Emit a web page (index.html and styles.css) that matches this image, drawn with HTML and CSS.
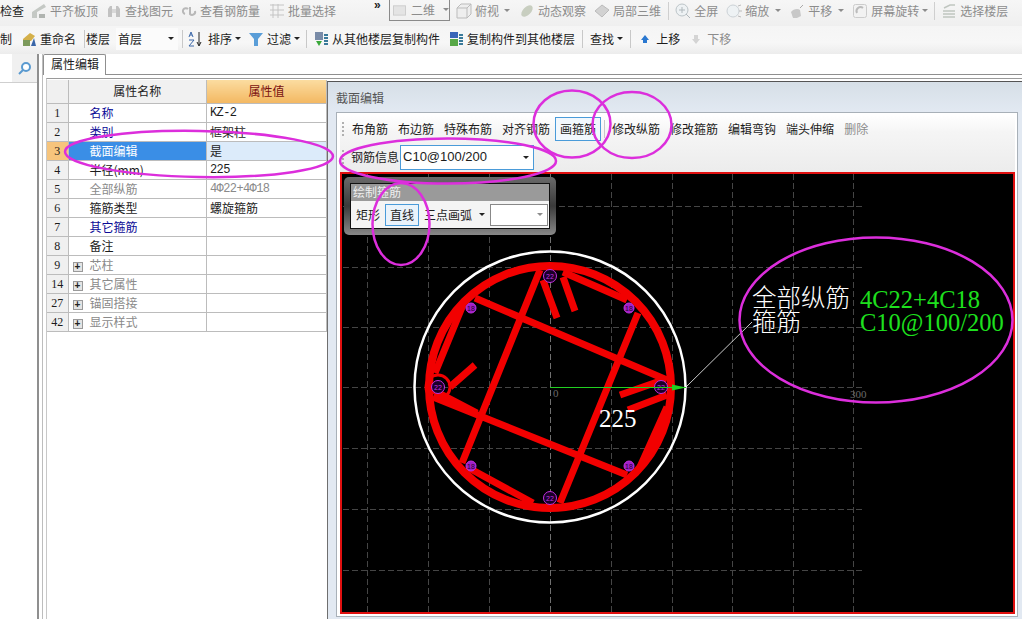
FILE: index.html
```html
<!DOCTYPE html>
<html lang="zh">
<head>
<meta charset="utf-8">
<title>属性编辑</title>
<link rel="stylesheet" href="styles.css">
</head>
<body>
<div class="app">
  <div class="bar bar1 muted">
    <span class="dark">检查</span>
    <svg class="ic ml7" viewBox="0 0 16 16"><path d="M1 15V9l12-8 2 3-9 5v6z" fill="#c4c8c4"/><path d="M8 11h6v4H8z" fill="#b0b4b0"/></svg><span>平齐板顶</span>
    <svg class="ic ml8" viewBox="0 0 16 16"><path d="M2 14V6l2-3h2v11zM10 14V3h2l2 3v8z" fill="#c2c2c2"/><path d="M6 6h4v4H6z" fill="#d8d8d8"/></svg><span>查找图元</span>
    <svg class="ic ml8" viewBox="0 0 16 16"><path d="M7 6a3 3 0 1 0-3 5M9 4v7a3 3 0 0 0 5-3" fill="none" stroke="#b8b8b8" stroke-width="2"/></svg><span>查看钢筋量</span>
    <svg class="ic ml9" viewBox="0 0 16 16"><path d="M1 2h14M1 7h14M1 12h14M4 1v14M9 1v14" stroke="#c4c4c4" fill="none"/></svg><span>批量选择</span>
    <span class="more">»</span>
    <span class="btn2d"><svg class="ic2" viewBox="0 0 14 12"><rect x="0.5" y="1.5" width="13" height="10" fill="#e4e4e4" stroke="#ccc"/></svg><span>二维</span><i class="arrow gray ml8"></i></span>
    <svg class="ic ml6" viewBox="0 0 16 16"><path d="M1 5l4-4h10v10l-4 4H1zM1 5h10v10M11 5l4-4" fill="#eee" stroke="#bbb"/></svg><span>俯视</span><i class="arrow gray ml5"></i>
    <svg class="ic ml9" viewBox="0 0 16 16"><ellipse cx="8" cy="8" rx="7" ry="4" transform="rotate(-45 8 8)" fill="#c8cec0"/></svg><span>动态观察</span>
    <svg class="ic ml8" viewBox="0 0 16 16"><path d="M8 2l7 5-7 7-7-6z" fill="#d2d2d2" stroke="#bbb"/></svg><span>局部三维</span>
    <i class="sep ml7"></i>
    <svg class="ic ml6" viewBox="0 0 16 16"><circle cx="7" cy="7" r="6" fill="#eef2f4" stroke="#bcc4c8"/><path d="M7 4v6M4 7h6M11 11l4 4" stroke="#b0b8bc" fill="none"/></svg><span>全屏</span>
    <svg class="ic ml8" viewBox="0 0 16 16"><circle cx="7" cy="8" r="6" fill="#eef2f4" stroke="#ccd2d6"/><path d="M12 3l3-1M13 8h3M12 13l3 1" stroke="#bbb"/></svg><span>缩放</span><i class="arrow gray ml6"></i>
    <svg class="ic ml8" viewBox="0 0 16 16"><path d="M2 9c2-3 7-4 9-2l1 6-4 2H4z" fill="#c8c8c8"/><path d="M11 5l3-3" stroke="#aaa"/></svg><span>平移</span><i class="arrow gray ml6"></i>
    <svg class="ic ml8" viewBox="0 0 16 16"><rect x="1.5" y="1.5" width="13" height="13" rx="2" fill="#f2f2f2" stroke="#ccc"/><path d="M5 10a4 4 0 0 1 6-5" fill="none" stroke="#bbb" stroke-width="2"/></svg><span>屏幕旋转</span><i class="arrow gray ml3"></i>
    <i class="sep ml6"></i>
    <svg class="ic ml6" viewBox="0 0 16 16"><path d="M3 5l6-3h5M2 8h12M2 11h12M2 14h12" stroke="#c0c6c0" fill="none" stroke-width="1.5"/></svg><span>选择楼层</span>
  </div>
  <div class="bar bar2">
    <span>制</span>
    <svg class="ic ml9" viewBox="0 0 16 16"><path d="M2 8l7-6 5 3-4 5H2z" fill="#d4b04a"/><path d="M2 9h7v6H2z" fill="#7c9a5c"/><path d="M10 15l3-8 2 8z" fill="#3a66a8"/></svg><span>重命名</span>
    <i class="sep sep2 ml8"></i>
    <span class="ml1">楼层</span>
    <span class="floor ml6"><span>首层</span><i class="arrow"></i></span>
    <i class="sep sep2 ml4"></i>
    <svg class="ic ml4 gap5" viewBox="0 0 16 16"><path d="M2 6l2-5 2 5M3 4h2M2 9h5l-5 6h5" fill="none" stroke="#3a66a8"/><path d="M12 1v13M10 11l2 4 2-4" fill="none" stroke="#222"/></svg><span>排序</span><i class="arrow ml3"></i>
    <svg class="ic ml7" viewBox="0 0 16 16"><path d="M1 2h14l-5 6v7H6V8z" fill="#5a9ed8"/></svg><span>过滤</span><i class="arrow ml3"></i>
    <i class="sep sep2 ml6"></i>
    <svg class="ic ml6" viewBox="0 0 16 16"><path d="M2 1h8v8H2z" fill="#7a8ca8"/><path d="M3 10l3 5 3-5z" fill="#3aa83a"/><path d="M11 4h4M11 7h4M11 10h4M11 13h4" stroke="#3a7a9a" stroke-width="2"/></svg><span>从其他楼层复制构件</span>
    <svg class="ic ml8" viewBox="0 0 16 16"><path d="M2 1h8v6H2z" fill="#3a66b8"/><path d="M2 8h8v7H2z" fill="#58a848"/><path d="M11 4h4M11 7h4M11 10h4M11 13h4" stroke="#3a7a9a" stroke-width="2"/></svg><span>复制构件到其他楼层</span>
    <i class="sep sep2 ml7"></i>
    <span class="ml7">查找</span><i class="arrow ml3"></i>
    <i class="sep sep2 ml7"></i>
    <svg class="ic ml6" viewBox="0 0 16 16"><path d="M8 4l4 5h-2v3H6V9H4z" fill="#2a78d0"/></svg><span>上移</span>
    <svg class="ic ml8" viewBox="0 0 16 16"><path d="M8 13l4-5H10V4H6v4H4z" fill="#d4d4d4"/></svg><span class="muted">下移</span>
  </div>
  <div class="main">
    <aside class="side">
      <div class="search"><span class="search-input"></span>
        <svg class="lens" viewBox="0 0 14 14"><circle cx="8" cy="6" r="4" fill="#fff" stroke="#5a9ad0" stroke-width="2"/><path d="M5 9l-4 4" stroke="#5a9ad0" stroke-width="2"/></svg>
      </div>
    </aside>
    <section class="content">
      <div class="tabs"><span class="tab">属性编辑</span></div>
      <div class="work">
        <div class="grid-wrap">
          <table class="props">
            <thead><tr><th class="n"></th><th>属性名称</th><th class="hv">属性值</th></tr></thead>
            <tbody>
              <tr><td class="n">1</td><td class="k blue">名称</td><td class="v mono">KZ-2</td></tr>
              <tr><td class="n">2</td><td class="k blue">类别</td><td class="v">框架柱</td></tr>
              <tr class="sel"><td class="n">3</td><td class="k">截面编辑</td><td class="v">是</td></tr>
              <tr><td class="n">4</td><td class="k">半径(mm)</td><td class="v mono">225</td></tr>
              <tr><td class="n">5</td><td class="k gray-t">全部纵筋</td><td class="v mono gray-t">4Φ22+4Φ18</td></tr>
              <tr><td class="n">6</td><td class="k">箍筋类型</td><td class="v">螺旋箍筋</td></tr>
              <tr><td class="n">7</td><td class="k blue">其它箍筋</td><td class="v"></td></tr>
              <tr><td class="n">8</td><td class="k">备注</td><td class="v"></td></tr>
              <tr><td class="n">9</td><td class="k gray-t"><b class="plus">+</b>芯柱</td><td class="v"></td></tr>
              <tr><td class="n">14</td><td class="k gray-t"><b class="plus">+</b>其它属性</td><td class="v"></td></tr>
              <tr><td class="n">27</td><td class="k gray-t"><b class="plus">+</b>锚固搭接</td><td class="v"></td></tr>
              <tr><td class="n">42</td><td class="k gray-t"><b class="plus">+</b>显示样式</td><td class="v"></td></tr>
            </tbody>
          </table>
        </div>
        <div class="panel">
          <div class="panel-title">截面编辑</div>
          <div class="panel-body">
            <div class="tools">
              <div class="row1">
                <i class="grip"></i>
                <span>布角筋</span><span>布边筋</span><span>特殊布筋</span><span>对齐钢筋</span>
                <span class="on">画箍筋</span><i class="sep sep2"></i>
                <span>修改纵筋</span><span>修改箍筋</span><span>编辑弯钩</span><span>端头伸缩</span><span class="muted">删除</span>
              </div>
              <div class="row2">
                <i class="grip"></i>
                <span>钢筋信息</span>
                <span class="rebar"><span>C10@100/200</span><i class="arrow"></i></span>
              </div>
            </div>
            <div class="canvas">
              <svg class="draw" viewBox="340 172 676 442">
                <g class="gridlines">
                  <path d="M367.500 174V612M428.500 174V612M489.500 174V612M611.500 174V612M672.500 174V612M732.500 174V612M793.500 174V612M853.500 174V612"/>
                  <path d="M343 206.500H864M343 267.500H864M343 327.500H864M343 387.500H864M343 448.500H864M343 509.500H864M343 570.500H864"/>
                  <path class="mid" d="M550.500 174V612"/>
                </g>
                <circle cx="550" cy="387" r="135.500" class="outer"/>
                <g class="red">
                  <circle cx="550" cy="387" r="121" class="ring"/>
                  <circle cx="438" cy="387" r="12" class="hoopring"/>
                  <path d="M475 298L667 380M540 270L462 463M433 397L627 475M638 313L560 503"/>
                  <path class="thick" d="M563 272L627 300M435 373L463 305M467 467L533 503M667 407L640 467M433 390L477 413"/>
                  <path d="M543 280L557 318M563 277L575 311M450 387L475 365M663 380L620 395M667 395L628 410"/>
                </g>
                <g class="bars big">
                  <circle cx="550" cy="276" r="6.500"/><circle cx="438" cy="387" r="6.500"/><circle cx="661" cy="387" r="6.500"/><circle cx="550" cy="498" r="6.500"/>
                  <text x="550" y="278.500">22</text><text x="438" y="389.500">22</text><text x="661" y="389.500">22</text><text x="550" y="500.500">22</text>
                </g>
                <g class="bars small">
                  <circle cx="471" cy="308" r="5"/><circle cx="629" cy="308" r="5"/><circle cx="471" cy="466" r="5"/><circle cx="629" cy="466" r="5"/>
                  <text x="471" y="310.500">18</text><text x="629" y="310.500">18</text><text x="471" y="468.500">18</text><text x="629" y="468.500">18</text>
                </g>
                <path class="axis" d="M550 387.500H686"/>
                <path class="arrowhead" d="M686 387.500L672 384.500V390.500z"/>
                <path class="leader" d="M686 387L752 322"/>
                <text x="553" y="397" class="tick">0</text>
                <text x="850" y="398" class="tick">300</text>
                <text x="599" y="427" class="dim">225</text>
                <text x="752" y="307" class="lab">全部纵筋</text>
                <text x="752" y="331" class="lab">箍筋</text>
                <text x="860" y="308" class="val">4C22+4C18</text>
                <text x="860" y="331" class="val">C10@100/200</text>
              </svg>
              <div class="palette">
                <div class="palette-title">绘制箍筋</div>
                <div class="palette-body">
                  <span>矩形</span><span class="on">直线</span><span>三点画弧</span><i class="arrow"></i>
                  <span class="pcombo"><i class="arrow gray"></i></span>
                </div>
              </div>
            </div>
          </div>
        </div>
      </div>
    </section>
  </div>
</div>
<svg class="marks" viewBox="0 0 1022 619">
  <ellipse cx="199" cy="154" rx="134" ry="23" transform="rotate(1 199 154)"/>
  <ellipse cx="572" cy="124" rx="38.500" ry="33.500"/>
  <ellipse cx="632" cy="125" rx="39.500" ry="33"/>
  <ellipse cx="448" cy="161" rx="108" ry="22.500"/>
  <ellipse cx="401" cy="224" rx="28.500" ry="41"/>
  <ellipse cx="876" cy="320" rx="136.500" ry="82.500"/>
</svg>
</body>
</html>
```
FILE: styles.css
```css
* { box-sizing: border-box; }
html, body { margin: 0; height: 100%; overflow: hidden; }
body { position: relative; background: #fff; color: #1c1c1c; font: 12px/16px "Noto Sans CJK SC", "Noto Sans", sans-serif; }
.app { display: flex; flex-direction: column; width: 1022px; height: 619px; }
i { display: block; font-style: normal; flex: none; }
.bar { display: flex; align-items: center; flex: none; white-space: nowrap; }
.bar1 { height: 26px; padding-bottom: 5px; background: linear-gradient(#f6f6f6, #efefef); }
.bar2 { height: 28px; padding-bottom: 3px; background: linear-gradient(#f5f5f5, #f7f7f7 60%, #ececec); }
.muted { color: #8c8c8c; }
.dark { color: #1c1c1c; }
.ic { width: 16px; height: 16px; margin-right: 3px; flex: none; }
.gap5 { margin-right: 5px; }
.ic2 { width: 14px; height: 12px; margin-right: 5px; }
.ml1 { margin-left: 1px; } .ml3 { margin-left: 3px; } .ml4 { margin-left: 4px; } .ml5 { margin-left: 5px; }
.ml6 { margin-left: 6px; } .ml7 { margin-left: 7px; } .ml8 { margin-left: 8px; } .ml9 { margin-left: 9px; }
.more { margin-left: 38px; width: 10px; align-self: flex-start; font: bold 12px/10px "Liberation Sans", sans-serif; color: #222; }
.btn2d { display: flex; align-items: center; width: 61px; height: 21px; margin-left: 5px; margin-top: -1px; padding-left: 3px; border: 1px solid #8a8a8a; border-top: 0; }
.arrow { width: 0; height: 0; border: 3px solid transparent; border-top: 3px solid #222; border-bottom: 0; }
.arrow.gray { border-top-color: #8c8c8c; }
.sep { width: 1px; height: 18px; background: #cfcfcf; }
.sep2 { height: 18px; background: #c8c8c8; }
.floor { display: flex; align-items: center; justify-content: space-between; width: 62px; height: 22px; padding: 0 4px 0 2px; background: #fbfbfb; }
.main { display: flex; flex: 1; min-height: 0; }
.side { width: 39px; flex: none; border-right: 2px solid #8f8f8f; }
.search { display: flex; align-items: center; justify-content: space-between; height: 29px; padding-right: 5px; background: #f0f0f0; border-bottom: 1px solid #cfcfcf; }
.search-input { width: 12px; height: 100%; background: #fff; }
.lens { width: 14px; height: 14px; }
.content { flex: 1; display: flex; flex-direction: column; min-width: 0; margin-left: 3px; border-left: 1px solid #bdbdbd; }
.tabs { height: 21px; flex: none; border-bottom: 1px solid #8f8f8f; }
.tab { display: block; width: 63px; height: 21px; padding: 1px 0 0 7px; background: #fff; border: 1px solid #8f8f8f; border-bottom: 0; border-radius: 2px 2px 0 0; }
.work { flex: 1; display: flex; min-height: 0; margin: 3px 0 0 3px; border-top: 1px solid #9a9a9a; border-left: 1px solid #c8c8c8; padding-top: 1px; }
.grid-wrap { width: 280px; flex: none; }
.props { width: 280px; table-layout: fixed; border-collapse: collapse; }
.props th, .props td { height: 19px; padding: 0; border: 1px solid #bcbcbc; border-top: 0; border-left: 0; font-weight: 400; overflow: hidden; white-space: nowrap; }
.props th { height: 23px; background: #f1f1f1; color: #222; }
.props .n { width: 21px; text-align: center; background: #f0f0f0; font: 12px/18px "Liberation Serif", serif; }
.props th.hv { width: 120px; background: linear-gradient(#fbdca0, #f3b862); color: #7a1010; }
.props .k { padding-left: 21px; }
.props .v { padding-left: 3px; }
.mono { font-family: "Liberation Mono", monospace !important; letter-spacing: -.6px; }
.blue { color: #0a0a96; }
.gray-t { color: #8a8a8a; }
.plus { display: inline-block; width: 10px; height: 10px; margin: 0 7px 0 -17px; border: 1px solid #9a9a9a; background: #e4e4e4; color: #222; font: 700 10px/8px "Liberation Sans", sans-serif; text-align: center; }
.sel .n { background: #f6c47c; }
.sel .k { background: #3a8ee6; color: #fff; }
.sel .v { background: #dcebfa; }
.panel { flex: 1; min-width: 0; display: flex; flex-direction: column; padding: 0 4px 2px 8px; margin-top: 1px; background: linear-gradient(#d6dfe7, #e2e9f2 30px); border-top: 1px solid #555; border-left: 1px solid #6f6f6f; }
.panel-title { height: 30px; flex: none; padding-top: 8px; color: #555; }
.panel-body { flex: 1; min-height: 0; display: flex; flex-direction: column; padding: 2px 2px 2px 3px; background: #fff; border: 1px solid #a8b0b8; }
.tools { flex: none; height: 57px; background: linear-gradient(#fff, #f5f5f5 30%, #ececec); }
.row1, .row2 { display: flex; align-items: center; height: 28px; padding-left: 2px; }
.row1 { gap: 10px; }
.row1 .on { width: 46px; height: 24px; margin: 0 -5px; padding: 3px 4px; border: 1px solid #4a9bd9; background: #f2f8fd; }
.row1 .sep { margin: 0 -3px 0 -2px; }
.grip { width: 2px; height: 15px; margin-right: -2px; background: repeating-linear-gradient(#b0b0b0 0 2px, transparent 2px 4px); }
.row2 { gap: 2px; }
.row2 .grip { margin-right: 5px; }
.rebar { display: flex; align-items: center; justify-content: space-between; width: 134px; height: 25px; margin-left: -1px; padding: 0 4px 0 2px; background: #fff; border: 1px solid #4a9bd9; font: 13px/16px "Liberation Sans", sans-serif; }
.canvas { position: relative; flex: 1; min-height: 0; background: #000; border: 2px solid #e01010; }
.draw { position: absolute; left: -2px; top: -2px; width: 676px; height: 442px; }
.gridlines path { fill: none; stroke: #454545; stroke-width: 1; stroke-dasharray: 6 3; }
.gridlines .mid { stroke: #707070; }
.outer { fill: none; stroke: #fff; stroke-width: 2.500; }
.red { fill: none; stroke: #f20000; stroke-width: 7; }
.red .ring { stroke-width: 8; }
.red .hoopring { stroke-width: 3; }
.red .thick { stroke-width: 7; }
.bars text { font: 7px "Liberation Sans", sans-serif; text-anchor: middle; }
.big circle { fill: #1a0028; stroke: #c430e0; stroke-width: 1; }
.big text { fill: #c430e0; }
.small circle { fill: #a020c8; stroke: #c430e0; stroke-width: 1; }
.small text { fill: #2a0030; }
.axis { stroke: #22d022; stroke-width: 1; }
.arrowhead { fill: #22d022; }
.leader { stroke: #fff; stroke-width: .8; fill: none; }
.tick { fill: #6a6a6a; font: 11px "Liberation Serif", serif; }
.dim { fill: #fff; font: 25px "Liberation Serif", serif; }
.lab { fill: #fff; font: 24.500px "Noto Sans CJK SC", sans-serif; font-weight: 300; }
.val { fill: #1ee01e; font: 24.500px "Liberation Serif", serif; }
.palette { position: absolute; left: 2px; top: 3px; width: 212px; height: 58px; padding: 6px; background: linear-gradient(#6a6a6a, #3a3a3a 50%, #888); border-radius: 5px; }
.palette-title { height: 18px; padding-left: 2px; background: #9a9a9a; color: #eee; border: 1px solid #111; border-bottom: 0; }
.palette-body { display: flex; align-items: center; gap: 5px; height: 28px; padding-left: 5px; background: #f4f4f4; border: 1px solid #111; border-top: 0; white-space: nowrap; }
.palette-body span { flex: none; }
.palette-body .on { width: 34px; height: 22px; padding: 2px 4px; border: 1px solid #4a9bd9; background: #eaf3fb; }
.palette-body > .arrow { margin-left: 2px; }
.pcombo { display: flex; align-items: center; justify-content: flex-end; width: 58px; height: 22px; padding-right: 4px; background: #fff; border: 1px solid #888; }
.marks { position: absolute; left: 0; top: 0; width: 1022px; height: 619px; pointer-events: none; }
.marks ellipse { fill: none; stroke: #dc2edc; stroke-width: 2.500; }
```
